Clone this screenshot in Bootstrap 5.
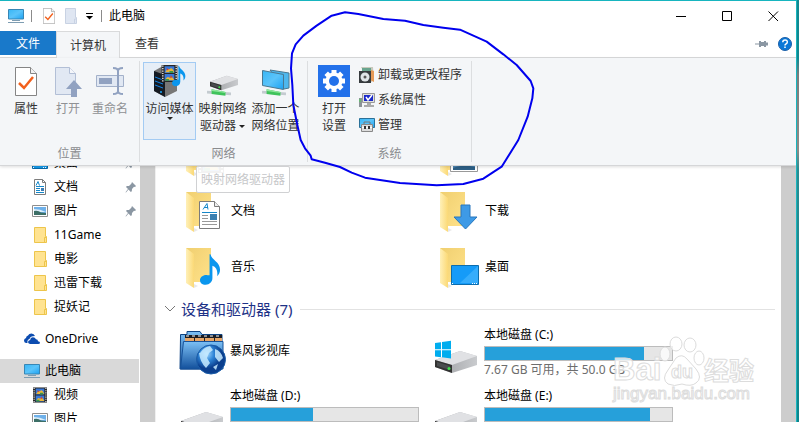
<!DOCTYPE html>
<html lang="zh-CN">
<head>
<meta charset="utf-8">
<meta name="viewport" content="width=device-width, initial-scale=1">
<title>此电脑</title>
<link href="https://cdn.jsdelivr.net/npm/bootstrap@5.3.0/dist/css/bootstrap.min.css" rel="stylesheet">
<style>
body{font-family:"Noto Sans","Noto Sans CJK SC",sans-serif;font-size:12px;line-height:16px;color:#000;background:#fff}
svg{display:block;flex:none}
.desk{background:linear-gradient(#12888f 0,#12888f 58px,#7b7d7c 75px,#8f8b86 150px,#2b8c90 170px,#0e858b 100%);padding-right:2px}
.win{border-top:1px solid #17b5bf;border-right:1px solid #17b5bf;background:#fff}
.btn{--bs-btn-font-size:12px;--bs-btn-line-height:17px;--bs-btn-padding-x:0;--bs-btn-padding-y:0;--bs-btn-border-radius:0;--bs-btn-color:#333;--bs-btn-disabled-color:#8f9194;--bs-btn-disabled-opacity:1;--bs-btn-disabled-border-color:transparent}
.titlebar{height:30px;padding-left:8px}
.titlebar .btn,.line-tool{--bs-btn-border-width:0}
.divider{width:1px;height:12px;margin:0 7px;background:#8b8b8b}
.wbtn{width:46px;height:30px}
.tabs{height:27px;padding-right:3px;border-bottom:1px solid #d9dadb}
.tab-file{width:56px;height:24px;--bs-btn-color:#fff;--bs-btn-bg:#1979ca}
.tab-on{width:64px;height:27px;--bs-btn-bg:#f4f6f8;--bs-btn-border-color:#d9dadb;border-bottom:0}
.tab-off{width:54px;height:25px}
.ribbon{background:#f4f6f8;border-bottom:1px solid #d5d6d8;padding:3px 0;box-shadow:0 1px 3px #0002;z-index:2}
.rgroup{border-right:1px solid #dcdee0}
.rbody{height:85px;padding:1px 5px 0}
.rbody.tight{padding-left:3px}
.sys .rbody.tight{padding-left:5px}
.rname{color:#8a8c8f}
.tool{display:flex;flex-direction:column;align-items:center;width:42px;height:78px;padding-top:2px;white-space:nowrap}
.tool.wide{width:53px}
.tool svg{margin-bottom:3px}
.tool.hot{--bs-btn-bg:#e6eef7;--bs-btn-border-color:#a3cbf3}
.arrow{display:inline-block;border:solid transparent;border-width:3px 3px 0;border-top-color:#222;vertical-align:middle}
.line-tool{height:25px;gap:3px}
.sys{min-width:164px}
.side{width:140px}
.tree{margin-top:-15px}
.tree a{height:24px;gap:6px;padding:0 3px 0 32px;color:#000;text-decoration:none}
.tree a.root{padding-left:24px;gap:5px}
.tree a.gap-top{margin-top:8px}
.tree a.sel{background:#d9d9d9;margin-right:1px}
.sbar{width:15px;background:#cdcdcd}
.files{padding-left:23px;border-left:1px solid #f0f0f0}
.tiles{display:grid;grid-template-columns:repeat(auto-fill,254px)}
.folders{margin-top:-39px;grid-auto-rows:56px}
.drives{grid-auto-rows:61px}
.tile{gap:4px}
.drives .tile{gap:3px;padding-top:4px}
.heading{height:28px;font-size:15px;line-height:20px;color:#1e3287;margin:0 6px 0 -15px;font-weight:400}
.rule{height:1px;background:#e2e2e2}
.usage{width:189px;height:15px;margin:3px 0 1px;border:1px solid #bcbcbc;background:#e6e6e6;border-radius:0}
.usage .progress-bar{background:#26a0da}
.free{color:#6d6d6d}
.tip{left:196px;top:165px;padding:5px 4px;height:27px;border:1px solid #d0d1d3;border-radius:2px;background:#fffffff0;color:#c6c7c9;z-index:3}
.ink{left:290px;top:4px;z-index:4;pointer-events:none}
.stamp{left:606px;top:329px;z-index:4;pointer-events:none}
</style>
<script src="https://cdn.jsdelivr.net/npm/bootstrap@5.3.0/dist/js/bootstrap.bundle.min.js"></script>
</head>
<body>
<svg width="0" height="0" class="position-absolute" aria-hidden="true">
<defs>
<linearGradient id="gBack" x1="0" x2="1" y1="0" y2="1"><stop stop-color="#f0cf70"/><stop offset="1" stop-color="#ffe28a"/></linearGradient>
<linearGradient id="gFlap" x1="0" x2="1"><stop stop-color="#fff0b8"/><stop offset="1" stop-color="#fbd976"/></linearGradient>
<linearGradient id="gScr" x1="0" x2="1" y1="0" y2="1"><stop stop-color="#37b6f6"/><stop offset=".5" stop-color="#5bc4fa"/><stop offset="1" stop-color="#1ba1f2"/></linearGradient>
<linearGradient id="gDisk" x1="0" x2="1"><stop stop-color="#9b9da0"/><stop offset="1" stop-color="#c9cbce"/></linearGradient>
<linearGradient id="gBlue" x1="0" y1="0" x2="0" y2="1"><stop stop-color="#7cc0f5"/><stop offset="1" stop-color="#12509c"/></linearGradient>
<radialGradient id="gGlobe" cx=".35" cy=".3"><stop stop-color="#a8dcff"/><stop offset=".5" stop-color="#2f86d8"/><stop offset="1" stop-color="#0b3f8e"/></radialGradient>
<symbol id="folder" viewBox="0 0 48 48"><path d="M7 5h25v34H15z" fill="url(#gBack)"/><path d="M7 5l8 6v34l-8-5z" fill="url(#gFlap)"/><path d="M15 41l4 2-4 2z" fill="#e8e8e8"/></symbol>
<symbol id="sfolder" viewBox="0 0 16 16"><path d="M2.500 .5h11v9h1v6h-12z" fill="#ffe391" stroke="#edc54b"/><path d="M12.500 15v-4.500h2" fill="none" stroke="#edc54b"/></symbol>
<symbol id="pc" viewBox="0 0 16 16"><path d="M.5 1.500h15v9.500H.5z" fill="url(#gScr)" stroke="#3786b5"/><path d="M4 12.500h8M0 14.500h16" stroke="#7e9db2"/></symbol>
<symbol id="pin" viewBox="0 0 12 12"><path d="M7 1l4 4-1 1-1-.3L7 8l-.2 2.200L5.800 11 3.500 8.500 1 11.500l-.5-.2L3 8 1 6l.8-1L4 5l2.300-2.300z" fill="#8b97a3"/></symbol>
<symbol id="pic" viewBox="0 0 16 16"><path d="M.5 2.500h15v11H.5z" fill="#fff" stroke="#8e8e8e"/><path d="M2 4h12v8H2z" fill="#6fb1ea"/><path d="M2 6q6 0 12 3H2z" fill="#dceefa"/><path d="M2 8q4-1 7 1.500l5 .5v2H2z" fill="#3d6f67"/></symbol>
<symbol id="sdoc" viewBox="0 0 16 16"><path d="M2.500.5h8l3 3v12h-11z" fill="#fff" stroke="#7d7d7d"/><path d="M10.500.5v3h3" fill="none" stroke="#7d7d7d"/><path d="M4 6.500l2-4 1.500 4M4 7.500h8M4 9.500h4M4 11.500h4M4 13.500h8" stroke="#1587c9" fill="none"/><path d="M9 9h3v3H9z" fill="#397bb3"/></symbol>
<symbol id="film" viewBox="0 0 26 28"><path d="M0 0h26v28H0z" fill="#282828"/><path d="M2 1v27M24 1v27" stroke="#fff" stroke-width="2" stroke-dasharray="2 2"/><path d="M5 2h16v11H5zM5 15h16v11H5z" fill="#3878d8"/><path d="M6 12q3-7 7-5 4-5 8 5zM6 25q3-8 7-4 4-5 8 4z" fill="#e7b63a"/><path d="M8 5l4 2-3 2zM15 17l3 3-4 2z" fill="#d94032"/><path d="M13 10h6v3h-6zM6 23h6v3H6z" fill="#3e9647"/></symbol>
<symbol id="disk" viewBox="0 0 44 24"><path d="M1 10L26 1l17 5v9L18 23 1 17z" fill="url(#gDisk)"/><path d="M1 10L26 1l17 5-25 9z" fill="#e0e1e4"/><path d="M1 10l17 5v8L1 17z" fill="#333"/><path d="M3 12l13 4v4L3 16z" fill="#4a4d4f"/><circle cx="15" cy="18.500" r="1.500" fill="#3ee04a"/></symbol>
<symbol id="check" viewBox="0 0 22 29"><path d="M.5.5h15l6 6v22H.5z" fill="#fff" stroke="#858585"/><path d="M15.500.5v6h6" fill="#f1f1f1" stroke="#858585"/><path d="M4 16l5 5 9-11" fill="none" stroke="#f2601c" stroke-width="2.500"/></symbol>
<symbol id="net" viewBox="0 0 26 9"><path d="M0 4l26 2" stroke="#c4cbd0" stroke-width="3"/><path d="M5 1l15 3v4L5 6z" fill="#3fc35b"/><path d="M5 1l15 3v1L5 3z" fill="#8ee79b"/></symbol>
<symbol id="note" viewBox="0 0 22 34"><path d="M11 1c1 6 10 8 10 16 0 3-1 5-3 7 1-7-2-10-5-11v13c0 4-3 7-7 7S0 31 0 28s4-6 8-5h2V1z" fill="#0a96ee"/></symbol>
</defs>
</svg>

<div class="desk vh-100 overflow-hidden">
<div class="win h-100 d-flex flex-column position-relative overflow-hidden">
  <header class="titlebar d-flex align-items-center flex-shrink-0">
    <svg width="16" height="16"><use href="#pc"/></svg>
    <span class="divider"></span>
    <button class="btn ms-1" aria-label="属性"><svg width="12" height="16"><use href="#check"/></svg></button>
    <button class="btn ms-2" aria-label="新建文件夹"><svg width="15" height="16" viewBox="0 0 15 16"><path d="M2.500.5h10v9h1v6h-11z" fill="#dfe6f2" stroke="#c8d2e3"/><path d="M11.500 15v-4h2" fill="none" stroke="#c8d2e3"/></svg></button>
    <button class="btn ms-2" aria-label="自定义快速访问工具栏"><svg width="8" height="8" viewBox="0 0 8 8"><path d="M0 1.500h7" stroke="#000"/><path d="M0 4h7L3.500 7.500z"/></svg></button>
    <span class="divider"></span>
    <span class="me-auto">此电脑</span>
    <button class="btn wbtn" aria-label="最小化"><svg class="m-auto" width="11" height="11"><path d="M0 5.500h10" stroke="#000"/></svg></button>
    <button class="btn wbtn" aria-label="最大化"><svg class="m-auto" width="11" height="11"><path d="M.5.5h9v9h-9z" stroke="#000" fill="none"/></svg></button>
    <button class="btn wbtn" aria-label="关闭"><svg class="m-auto" width="11" height="11"><path d="M.5.5l9.500 9.500M10 .5L.5 10" stroke="#000"/></svg></button>
  </header>
  <nav class="tabs d-flex align-items-start flex-shrink-0">
    <button class="btn tab-file">文件</button>
    <button class="btn tab-on">计算机</button>
    <button class="btn tab-off">查看</button>
    <button class="btn ms-auto me-2 pt-2" aria-label="固定功能区"><svg width="13" height="8" viewBox="0 0 13 8"><path d="M0 4h5" stroke="#8b97a3"/><path d="M4 1h2v1h3V1h2v6H9V6H6v1H4z" fill="#8b97a3"/><path d="M11 4h2" stroke="#8b97a3" stroke-width="3"/></svg></button>
    <button class="btn pt-1" aria-label="帮助"><svg width="14" height="16" viewBox="0 0 14 16"><circle cx="7" cy="8" r="6.500" fill="#0b78d7" stroke="#1b5fa8"/><path d="M4.800 6.200q0-2.200 2.300-2.200t2.200 2q0 1.200-1.200 1.900T7 9.500M7 10.500V12" fill="none" stroke="#fff" stroke-width="1.500"/></svg></button>
  </nav>
  <section class="ribbon d-flex flex-shrink-0 position-relative">
    <div class="rgroup text-center">
      <div class="rbody d-flex pe-2">
        <button class="btn tool"><svg width="22" height="32" viewBox="0 -1 22 32"><use href="#check" y="1" width="22" height="29"/></svg>属性</button>
        <button class="btn tool" disabled><svg width="28" height="32" viewBox="0 0 28 32"><path d="M1.500 2.500h14l6 6v21h-20z" fill="#e1e8f3" stroke="#b2bfd6"/><path d="M15.500 2.500v6h6" fill="#f4f6fa" stroke="#b2bfd6"/><path d="M20 15l8 9h-5v8h-6v-8h-5z" fill="#91a2c1"/></svg>打开</button>
        <button class="btn tool" disabled><svg width="28" height="32" viewBox="0 0 28 32"><path d="M.5 10.500h27v11H.5z" fill="#e1e8f3" stroke="#a3b1ca"/><path d="M3 13h13v6H3z" fill="#91a2c1"/><path d="M17 3q5 0 5 3v20q0 3-5 3M27 3q-5 0-5 3v20q0 3 5 3" fill="none" stroke="#91a2c1" stroke-width="2"/></svg>重命名</button>
      </div>
      <div class="rname">位置</div>
    </div>
    <div class="rgroup text-center">
      <div class="rbody tight d-flex">
        <button class="btn tool wide hot"><svg width="32" height="32" viewBox="0 0 32 32"><path d="M0 6l9-5 14 5v20l-12 6L0 26z" fill="#777"/><path d="M0 6l11 4v22L0 26z" fill="#151b23"/><path d="M1 12l8 3M1 16l8 3M1 20l8 3" stroke="#1384e8"/><circle cx="7" cy="27" r="1" fill="#19a9ff"/><use href="#film" x="7" y="0" width="17" height="17"/><use href="#note" x="18" y="0" width="14" height="22"/></svg>访问媒体<span class="arrow"></span></button>
        <button class="btn tool wide"><svg width="32" height="32" viewBox="0 0 32 32"><use href="#disk" x="2" y="10" width="30" height="16"/><use href="#net" x="0" y="23" width="24" height="9"/></svg><span>映射网络<br>驱动器 <span class="arrow"></span></span></button>
        <button class="btn tool wide"><svg width="32" height="32" viewBox="0 0 32 32"><path d="M10 5l19 3v15l-5 1z" fill="#4eb7ed" stroke="#4a7891"/><path d="M2.500 5.500l21 4v15l-21-4z" fill="url(#gScr)" stroke="#4a7891"/><use href="#net" x="2" y="23" width="24" height="9"/></svg><span>添加一个<br>网络位置</span></button>
      </div>
      <div class="rname">网络</div>
    </div>
    <div class="rgroup sys text-center">
      <div class="rbody tight d-flex">
        <button class="btn tool"><svg width="32" height="32" viewBox="-16 -16 32 32"><path d="M-16-16h32v32h-32z" fill="#2371ea"/><g stroke="#fff" stroke-width="5"><path d="M0-11v22M-11 0h22M-7.800-7.800l15.600 15.600M7.800-7.800L-7.800 7.800"/></g><circle r="8.500" fill="#fff"/><circle r="5" fill="#2371ea"/></svg><span>打开<br>设置</span></button>
        <div class="d-flex flex-column align-items-start ms-1">
          <button class="btn line-tool d-flex align-items-center"><svg width="16" height="16" viewBox="0 0 16 16"><path d="M2 0h12l1 13-4 3z" fill="#c9c9bd"/><path d="M9 2l6 2v11l-4-2z" fill="#e69a57"/><path d="M3 1h9v3H3z" fill="#69a58e"/><path d="M0 4h12v12H0z" fill="#363b3e"/><circle cx="6" cy="10" r="4.500" fill="#dfe4e7"/><circle cx="6" cy="10" r="1.500" fill="#555"/></svg>卸载或更改程序</button>
          <button class="btn line-tool d-flex align-items-center"><svg width="16" height="16" viewBox="0 0 16 16"><path d="M0 6h3v9H0z" fill="#8b9297"/><path d="M1 7v3" stroke="#46db54"/><path d="M3.500 1.500h12v9h-12z" fill="#e1e1dc" stroke="#999"/><path d="M5 3h9v6H5z" fill="#1b2acb"/><path d="M7 5l2 3 4-5" stroke="#fff" fill="none" stroke-width="1.500"/><path d="M8 11h4v2h3v2H5v-2h3z" fill="#aaa"/></svg>系统属性</button>
          <button class="btn line-tool d-flex align-items-center"><svg width="16" height="16" viewBox="0 0 16 16"><path d="M.5 1.500h15v9H.5z" fill="url(#gScr)" stroke="#2b7199"/><path d="M5 7V5h6v2" stroke="#777" fill="none"/><path d="M2.500 7.500h11v7h-11z" fill="#ddd" stroke="#888"/><path d="M3 10.500h10" stroke="#fff"/><path d="M5 9h2v3H5zM9 9h2v3H9z" fill="#333"/></svg>管理</button>
        </div>
      </div>
      <div class="rname">系统</div>
    </div>
  </section>

  <div class="d-flex flex-grow-1 overflow-hidden">
    <aside class="side flex-shrink-0">
      <nav class="tree d-flex flex-column">
        <a href="#" class="d-flex align-items-center"><svg width="16" height="16"><path d="M.5 2.500h15v11H.5z" fill="#139bed" stroke="#0969a8"/><path d="M1 12.500h14" stroke="#fff" stroke-dasharray="1 9 1 1"/></svg>桌面<svg class="ms-auto" width="12" height="12"><use href="#pin"/></svg></a>
        <a href="#" class="d-flex align-items-center"><svg width="16" height="16"><use href="#sdoc"/></svg>文档<svg class="ms-auto" width="12" height="12"><use href="#pin"/></svg></a>
        <a href="#" class="d-flex align-items-center"><svg width="16" height="16"><use href="#pic"/></svg>图片<svg class="ms-auto" width="12" height="12"><use href="#pin"/></svg></a>
        <a href="#" class="d-flex align-items-center"><svg width="16" height="16"><use href="#sfolder"/></svg>11Game</a>
        <a href="#" class="d-flex align-items-center"><svg width="16" height="16"><use href="#sfolder"/></svg>电影</a>
        <a href="#" class="d-flex align-items-center"><svg width="16" height="16"><use href="#sfolder"/></svg>迅雷下载</a>
        <a href="#" class="d-flex align-items-center"><svg width="16" height="16"><use href="#sfolder"/></svg>捉妖记</a>
        <a href="#" class="root gap-top d-flex align-items-center"><svg width="16" height="16" viewBox="0 0 16 16"><path d="M2 12q-2-.5-2-2.500T2 7q0-2 2-2.500Q5 2.500 7.500 2.500T11 5Q6 5 5.500 8 3 8.500 3.500 12z" fill="#0c4cb0"/><path d="M6 13q-2-.3-2-2t2.200-2q.3-2.700 2.800-2.700 2 0 3 2 2 0 2 2 2 .2 2 1.500T14 13z" fill="#0c4cb0"/></svg>OneDrive</a>
        <a href="#" class="root gap-top sel d-flex align-items-center"><svg width="16" height="16"><use href="#pc"/></svg>此电脑</a>
        <a href="#" class="d-flex align-items-center"><svg width="16" height="16"><use href="#film" x="1" y="0" width="14" height="16"/></svg>视频</a>
        <a href="#" class="d-flex align-items-center"><svg width="16" height="16"><use href="#pic"/></svg>图片</a>
      </nav>
    </aside>
    <div class="sbar flex-shrink-0"></div>
    <main class="files flex-grow-1">
      <div class="tiles folders">
        <div class="tile d-flex align-items-center"><svg width="48" height="48"><use href="#folder"/><use href="#film" x="19" y="14" width="26" height="28"/></svg>视频</div>
        <div class="tile d-flex align-items-center"><svg width="48" height="48"><use href="#folder"/><path d="M17.500 20.500h27v20h-27z" fill="#fff" stroke="#999"/><path d="M20 23h22v16H20z" fill="#4e86b4"/><path d="M20 37q10-4 22-1v3H20z" fill="#2d5f85"/></svg>图片</div>
        <div class="tile d-flex align-items-center"><svg width="48" height="48"><use href="#folder"/><path d="M20.500 14.500h15l5 5v22h-20z" fill="#fff" stroke="#7b7b7b"/><path d="M35.500 14.500v5h5" fill="#eee" stroke="#7b7b7b"/><path d="M24 22.500l4-6 1 6M25 20.500h4M23 25.500h15" stroke="#1587c9" fill="none"/><path d="M23 28.500h6M23 31.500h6M23 34.500h15M23 37.500h15" stroke="#999"/><path d="M31 27h7v6h-7z" fill="#3b7fb0"/></svg>文档</div>
        <div class="tile d-flex align-items-center"><svg width="48" height="48"><use href="#folder"/><path d="M28 18h9v12h7L32.500 42 21 30h7z" fill="#3e9ae6" stroke="#2877bd"/></svg>下载</div>
        <div class="tile d-flex align-items-center"><svg width="48" height="48"><use href="#folder"/><use href="#note" x="21" y="10" width="21" height="33"/></svg>音乐</div>
        <div class="tile d-flex align-items-center"><svg width="48" height="48"><use href="#folder"/><path d="M18.500 22.500h27v19h-27z" fill="#159bf8" stroke="#0c6dae"/><path d="M45 23v17H27z" fill="#36adfc"/><path d="M19 40.500h2M39 40.500h6" stroke="#fff" stroke-dasharray="1 1"/></svg>桌面</div>
      </div>
      <h2 class="heading d-flex align-items-center"><svg class="me-1" width="13" height="12" viewBox="0 0 13 12"><path d="M1 3l5 5 5-5" fill="none" stroke="#777"/></svg>设备和驱动器 (7)<span class="rule flex-grow-1 ms-2"></span></h2>
      <div class="tiles drives">
        <div class="tile d-flex align-items-start"><svg class="mt-1" width="48" height="44" viewBox="0 0 48 44"><path d="M1.500 6V3.500H8V.5h13l2 3h20V38H1z" fill="url(#gBlue)" stroke="#0e4485"/><path d="M6 4h37v8H6z" fill="#1a1c22"/><path d="M6 7h37v6H6z" fill="#e6a566"/><path d="M15.500 6v7M25.500 6v7M35.500 6v7" stroke="#222"/><path d="M7 5h36" stroke="#fff" stroke-width="1" stroke-dasharray="3 3"/><path d="M4.500 10.500H44V38H1.500z" fill="url(#gBlue)" stroke="#17529a"/><circle cx="32" cy="28.500" r="14.500" fill="url(#gGlobe)" stroke="#1b5da8"/><path d="M21 22q4-6 10-7l3 4-4 3-2 5 3 5-4 5q-6-6-7-15zM36 18q6 2 8 9l-4 4-4-5zM34 36l5-3-2 6z" fill="#c8ebff" opacity=".85"/></svg><span class="pt-3">暴风影视库</span></div>
        <div class="tile d-flex align-items-start"><svg width="48" height="48" viewBox="0 0 48 48"><use href="#disk" x="1" y="23" width="44" height="24"/><path d="M2 16l6-.8v7H2zM9 15l9-1.200v8.400H9zM2 23.200h6v7L2 29.500zM9 23.200h9v8.300L9 30.300z" fill="#00adef"/></svg><div><div>本地磁盘 (C:)</div><div class="progress usage" role="progressbar" aria-valuenow="85" aria-label="C 盘用量"><div class="progress-bar" style="width:85%"></div></div><div class="free">7.67 GB 可用，共 50.0 GB</div></div></div>
        <div class="tile d-flex align-items-start"><svg width="48" height="48" viewBox="0 0 48 48"><use href="#disk" x="1" y="23" width="44" height="24"/></svg><div><div>本地磁盘 (D:)</div><div class="progress usage" role="progressbar" aria-valuenow="44" aria-label="D 盘用量"><div class="progress-bar" style="width:44%"></div></div></div></div>
        <div class="tile d-flex align-items-start"><svg width="48" height="48" viewBox="0 0 48 48"><use href="#disk" x="1" y="23" width="44" height="24"/></svg><div><div>本地磁盘 (E:)</div><div class="progress usage" role="progressbar" aria-valuenow="88" aria-label="E 盘用量"><div class="progress-bar" style="width:88%"></div></div></div></div>
      </div>
    </main>
    <div class="sbar flex-shrink-0"></div>
  </div>

  <div class="tip position-absolute" role="tooltip">映射网络驱动器</div>
  <svg class="ink position-absolute" width="250" height="190" viewBox="0 0 750 570"><path d="M165 22L125 32 80 62 40 92 17 118 6 145 3 190 7 240 10 300 22 360 32 405 45 430 62 452 65 463 105 473 150 486 185 503 225 518 330 534 440 541 520 537 580 521 635 485 685 405 713 335 727 280 730 250 722 228 680 180 640 148 590 110 550 92 510 74 460 68 400 60 345 47 280 42 205 27Z" fill="none" stroke="#00e" stroke-width="6" stroke-linejoin="round"/></svg>
  <svg class="stamp position-absolute" width="160" height="80" viewBox="0 0 160 80" fill="#fff" fill-opacity=".75" stroke="#dcdcdc" font-family="Liberation Sans, Noto Sans CJK SC, sans-serif">
    <g><ellipse cx="59" cy="24" rx="5" ry="7"/><ellipse cx="70" cy="14" rx="6" ry="7"/><ellipse cx="84" cy="15" rx="6" ry="7"/><ellipse cx="93" cy="28" rx="5" ry="7"/><path d="M70 28q6-5 11 1l9 10q7 9 0 14-5 4-14 1-8 3-14 0-7-5 0-14z"/></g>
    <text x="7" y="50" font-size="31" font-weight="700">Bai</text>
    <text x="65" y="48" font-size="18" font-weight="700">du</text>
    <text x="98" y="50" font-size="25" font-weight="700">经验</text>
    <text x="7" y="69" font-size="17">jingyan.baidu.com</text>
  </svg>
</div>
</div>
</body>
</html>
